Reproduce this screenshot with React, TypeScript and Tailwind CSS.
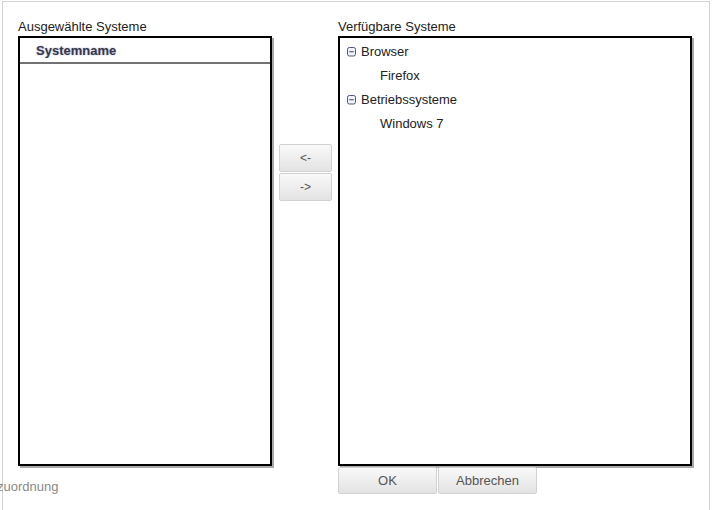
const tree = [
  { name: 'Browser', children: ['Firefox'] },
  { name: 'Betriebssysteme', children: ['Windows 7'] },
];

function MinusBox() {
  return (
    <svg width="9" height="10" viewBox="0 0 9 10" className="shrink-0">
      <rect x="0.5" y="0.5" width="8" height="8.5" rx="1.8" fill="#f3f4fa" stroke="#4d5679" />
      <line x1="2.2" y1="4.75" x2="6.8" y2="4.75" stroke="#4d5679" strokeWidth="1.1" />
    </svg>
  );
}

function GrayButton({ label, className }: { label: string; className: string }) {
  return (
    <button
      className={`flex items-center justify-center border border-[#d2d2d2] rounded-[2px] bg-gradient-to-b from-[#f9f9f9] to-[#e3e3e3] text-[#555] ${className}`}
    >
      {label}
    </button>
  );
}

export default function App() {
  return (
    <div
      className="w-[712px] h-[510px] bg-white overflow-hidden text-[13px] text-[#222]"
      style={{ fontFamily: '"Liberation Sans", Arial, sans-serif' }}
    >
      <div className="ml-[2px] mt-[1px] w-[708px] h-[509px] border-l border-t border-r border-[#d3d3d3] pt-[16px] pl-[15px] flex">
        {/* Ausgewählte Systeme */}
        <div className="w-[254px] flex flex-col">
          <div className="h-[18px] leading-[18px]">Ausgewählte Systeme</div>
          <div className="h-[430px] border-2 border-black shadow-[2px_2px_0_#a9a9a9] bg-white">
            <div className="h-[26px] border-b-2 border-[#727272] pl-[16px] pt-[2px] font-bold leading-[22px] text-[#383848] [text-shadow:0_0_2px_#a8acd8]">
              Systemname
            </div>
          </div>
          <div className="mt-[12px] -ml-[21px] leading-[18px] text-[#8a8a8a]">zuordnung</div>
        </div>

        {/* Pfeile */}
        <div className="w-[66px] pl-[7px] pt-[126px] flex flex-col gap-[1px]">
          <GrayButton label="<-" className="w-[53px] h-[28px] text-[12px]" />
          <GrayButton label="->" className="w-[53px] h-[28px] text-[12px]" />
        </div>

        {/* Verfügbare Systeme */}
        <div className="w-[354px] flex flex-col">
          <div className="h-[18px] leading-[18px]">Verfügbare Systeme</div>
          <div className="h-[430px] border-2 border-black shadow-[2px_2px_0_#a9a9a9] bg-white pt-[2px]">
            {tree.map((group) => (
              <div key={group.name}>
                <div className="h-[24px] leading-[24px] flex items-center pl-[7px] gap-[5px]">
                  <MinusBox />
                  <span>{group.name}</span>
                </div>
                {group.children.map((child) => (
                  <div key={child} className="h-[24px] leading-[24px] pl-[40px]">
                    {child}
                  </div>
                ))}
              </div>
            ))}
          </div>
          <div className="mt-[1px] flex gap-[1px] relative">
            <GrayButton label="OK" className="w-[99px] h-[27px] text-[13px]" />
            <GrayButton label="Abbrechen" className="w-[99px] h-[27px] text-[13px]" />
          </div>
        </div>
      </div>
    </div>
  );
}
